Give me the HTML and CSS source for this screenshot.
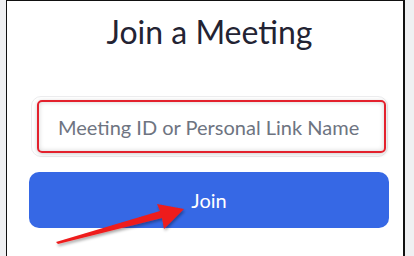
FILE: index.html
```html
<!DOCTYPE html>
<html lang="en">
<head>
    <meta charset="UTF-8">
    <meta name="viewport" content="width=device-width, initial-scale=1.0">
    <title>Join a Meeting</title>
    <link rel="stylesheet" href="styles.css">
</head>
<body>
    <div class="panel">
        <h1>Join a Meeting</h1>

        <div class="field">
            <input type="text" class="meeting-input" placeholder="Meeting ID or Personal Link Name">
            <span class="highlight"></span>
        </div>

        <button class="join-button">Join</button>

        <!-- annotation arrow pointing at the button -->
        <svg class="arrow" width="414" height="256" viewBox="0 0 414 256">
            <defs>
                <filter id="shade" x="-20%" y="-50%" width="140%" height="200%">
                    <feDropShadow dx="1" dy="2" stdDeviation="1.5" flood-color="#000" flood-opacity="0.35"/>
                </filter>
            </defs>
            <polygon points="56,242 160,211 157,204 184,209 164,229 162,218 58,244" fill="#ee1c1c" filter="url(#shade)"/>
        </svg>
    </div>
</body>
</html>
```

FILE: styles.css
```css
body {
    margin: 0;
    background-color: #eff0f2;
    font-family: 'Lato', 'Noto Sans', sans-serif;
    height: 256px;
    overflow: hidden;
}
.panel {
    position: relative;
    margin-left: 6px;
    width: 399px;
    height: 256px;
    background-color: #fff;
    border-style: solid;
    border-color: #111;
    border-width: 1px 2px 0 1px;
    padding: 0 17px 0 22px;
    box-sizing: border-box;
}
h1 {
    margin: 0;
    padding-top: 12px;
    height: 95px;
    box-sizing: border-box;
    text-align: center;
    font-size: 32px;
    font-weight: 400;
    color: #232333;
    line-height: 38px;
    padding-left: 4px;
}
.field {
    position: relative;
    margin-left: 2px;
    width: 357px;
}
.meeting-input {
    display: block;
    width: 100%;
    height: 61px;
    box-sizing: border-box;
    border: 1px solid #ececee;
    border-radius: 10px;
    padding: 0 0 0 26px;
    font-family: 'Lato', 'Noto Sans', sans-serif;
    font-size: 20px;
    color: #232333;
    background: #fff;
    outline: none;
}
.meeting-input::placeholder {
    color: #6e7481;
}
.highlight {
    position: absolute;
    left: 6px;
    top: 4px;
    width: 349px;
    height: 53px;
    box-sizing: border-box;
    border: 2px solid #e3212d;
    border-radius: 5px;
    box-shadow: 0 1px 4px rgba(0, 0, 0, 0.2), inset 0 0 5px rgba(0, 0, 0, 0.18);
    pointer-events: none;
}
.join-button {
    display: block;
    margin-top: 15px;
    width: 360px;
    height: 56px;
    border: none;
    border-radius: 10px;
    background-color: #3668e5;
    color: #fff;
    font-family: 'Lato', 'Noto Sans', sans-serif;
    font-size: 20px;
    cursor: pointer;
}
.arrow {
    position: absolute;
    left: -7px;
    top: -1px;
    pointer-events: none;
}
```
